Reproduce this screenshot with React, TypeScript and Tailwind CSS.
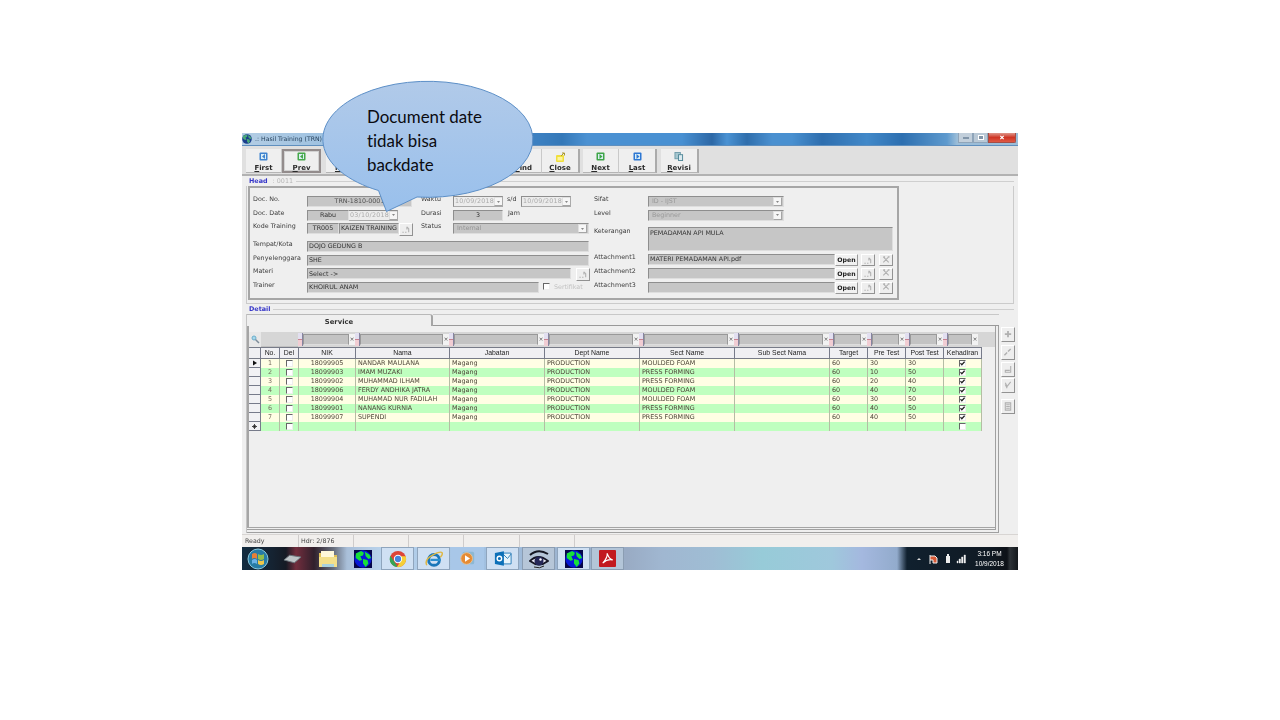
import type { ReactNode } from "react";

const FIELD =
  "flex items-center overflow-hidden whitespace-nowrap border border-t-[#8e8e8e] border-l-[#8e8e8e] border-r-[#dedede] border-b-[#dedede] bg-[#c6c6c6] px-[1px] leading-none";

function Label({ children, className = "" }: { children: ReactNode; className?: string }) {
  return <span className={"shrink-0 whitespace-nowrap leading-none text-[#3c3c3c] " + className}>{children}</span>;
}

function Arrow() {
  return (
    <span className="ml-auto flex h-[9px] w-[9px] shrink-0 items-center justify-center border border-t-[#e0e0e0] border-l-[#e0e0e0] border-r-[#a5a5a5] border-b-[#a5a5a5] bg-[#f6f6f6]">
      <svg viewBox="0 0 6 4" className="h-[2px] w-[3px]"><path d="M0 0h6L3 4z" fill="#888" /></svg>
    </span>
  );
}

function Small({ kind, className = "" }: { kind: string; className?: string }) {
  return (
    <span className={"flex h-[13px] w-[14px] shrink-0 items-center justify-center border border-t-white border-l-white border-r-[#929292] border-b-[#929292] bg-[#eeeeee] " + className}>
      <svg viewBox="0 0 10 10" className="h-[9px] w-[10px]" fill="none" stroke="#b0b0b0" strokeWidth="1.2">
        {kind === "x" && <path d="M2 1l6 6M8 1L2 7M2 1h2M7 1h2" />}
        {kind === "find" && <path d="M1 8h1.5M4 8h1.5M6 2l2 2v4M6 2v3" />}
        {kind === "plus" && <path d="M5 1v7M1.500 4.500h7" strokeWidth="2" />}
        {kind === "edit" && <path d="M1 8l3-3M5 4l3-3" strokeWidth="1.600" />}
        {kind === "save" && <path d="M8 1v7H2V6h5" />}
        {kind === "check" && <path d="M2 2l2 4 4-5M2 4l2 4" />}
        {kind === "doc" && <path d="M2 1h6v8H2zM3 3h4M3 5h4M3 7h4" />}
      </svg>
    </span>
  );
}

function DateField({ value, className }: { value: string; className: string }) {
  return (
    <span className={"flex h-[11px] shrink-0 items-center overflow-hidden whitespace-nowrap border border-t-[#8e8e8e] border-l-[#8e8e8e] border-r-[#aaa] border-b-[#aaa] bg-[#ececec] pl-[1px] leading-none tracking-[0.25px] text-[#aaa] " + className}>
      {value}<Arrow />
    </span>
  );
}

function ToolButton({ label, width, icon, framed = false, last = false }: { label: string; width: string; icon?: ReactNode; framed?: boolean; last?: boolean }) {
  return (
    <div className={"flex h-[24px] shrink-0 flex-col items-center justify-between bg-[#efefef] " + width + " " + (framed ? "border-2 border-[#938c8c] pt-[1px] outline-1 -outline-offset-3 outline-[#d2d2d2]" : "pt-[3px] border-b border-b-[#b5b5b5] border-r " + (last ? "border-r-2 border-r-[#ababab]" : "border-r-[#c9c9c9]"))}>
      <span className="flex h-[10px] items-center">{icon}</span>
      <span className={"text-[7px] leading-[8px] font-bold text-[#2b2b2b] " + (framed ? "-mb-px" : "")}>
        <span className="underline">{label.charAt(0)}</span>{label.slice(1)}
      </span>
    </div>
  );
}

function Square({ color, dir }: { color: string; dir: string }) {
  return (
    <svg viewBox="0 0 9 9" className="h-[9px] w-[9px]">
      <rect x=".5" y=".5" width="8" height="8" rx="1" fill={color} />
      <rect x="2" y="2" width="5" height="5" fill="#dbeef5" />
      <path d={dir === "l" ? "M6 2v5L3 4.500z" : "M3.500 2v5l3-2.500z"} fill={color} />
    </svg>
  );
}

const columns = [
  { name: "NIK", w: "w-[57px]" },
  { name: "Nama", w: "w-[94px]" },
  { name: "Jabatan", w: "w-[95px]" },
  { name: "Dept Name", w: "w-[95px]" },
  { name: "Sect Name", w: "w-[95px]" },
  { name: "Sub Sect Nama", w: "w-[95px]" },
  { name: "Target", w: "w-[38px]" },
  { name: "Pre Test", w: "w-[38px]" },
  { name: "Post Test", w: "w-[38px]" },
  { name: "Kehadiran", w: "w-[38px]" },
];

const M = "MOULDED FOAM";
const P = "PRESS FORMING";
const rows = [
  ["18099905", "NANDAR MAULANA", M, "30", "30"],
  ["18099903", "IMAM MUZAKI", P, "10", "50"],
  ["18099902", "MUHAMMAD ILHAM", P, "20", "40"],
  ["18099906", "FERDY ANDHIKA JATRA", M, "40", "70"],
  ["18099904", "MUHAMAD NUR FADILAH", M, "30", "50"],
  ["18099901", "NANANG KURNIA", P, "40", "50"],
  ["18099907", "SUPENDI", P, "40", "50"],
];

function Check({ on = false }: { on?: boolean }) {
  return (
    <span className="flex h-[7px] w-[7px] shrink-0 border border-t-[#666] border-l-[#666] border-r-[#eee] border-b-[#eee] bg-white">
      {on && <svg viewBox="0 0 6 6" className="h-[5px] w-[5px]"><path d="M.5 2.500L2.200 4.500 5.500.8" fill="none" stroke="#222" strokeWidth="1.500" /></svg>}
    </span>
  );
}

function Row({ index, data }: { index: number; data?: string[] }) {
  const cells = data ? [data[0], data[1], "Magang", "PRODUCTION", data[2], "", "60", data[3], data[4]] : ["", "", "", "", "", "", "", "", ""];
  return (
    <div className={"flex h-[9.060px] text-[6.400px] leading-[9px] text-[#4d4538] " + (index % 2 ? "bg-[#bfffbf]" : "bg-[#fffee4]")}>
      <div className="flex w-[12px] items-center justify-center border-r border-b border-[#777b8a] bg-[#f2f2f4]">
        {index === 0 && <svg viewBox="0 0 5 6" className="h-[6px] w-[4px]"><path d="M0 0l5 3-5 3z" fill="#111" /></svg>}
        {!data && <svg viewBox="0 0 6 6" className="h-[5px] w-[5px]"><path d="M3 0v6M0 3h6M1.500 1.500l3 3M4.500 1.500l-3 3" stroke="#222" /></svg>}
      </div>
      <div className="w-[19px] border-r border-[#b5bda4] text-center text-[#777060]">{data ? index + 1 : ""}</div>
      <div className="flex w-[19px] items-center justify-center border-r border-[#b5bda4]"><Check /></div>
      {cells.map((cell, i) => (
        <div key={i} className={columns[i].w + " overflow-hidden border-r border-[#b5bda4] whitespace-nowrap " + (i === 0 ? "text-center" : "pl-[2px]")}>{cell}</div>
      ))}
      <div className="flex w-[38px] items-center justify-center border-r border-[#b5bda4]"><Check on={!!data} /></div>
    </div>
  );
}

function Earth({ square = false }: { square?: boolean }) {
  return (
    <svg viewBox="0 0 20 20" className="h-full w-full">
      {square ? <rect width="20" height="20" fill="#06064a" /> : null}
      <circle cx="10" cy="10" r="9.600" fill={square ? "#0718d8" : "#1a3e8c"} />
      <path d="M2 4l6-3 3 2-1 3-3 1 2 4-3 1-4-3zM12 2l5 3 2 4-3 1-3-3zM10 10l5 1 1 4-3 4-3-4z" fill={square ? "#17e03a" : "#48a87a"} />
    </svg>
  );
}

function Task({ className = "", children }: { className?: string; children: ReactNode }) {
  return <div className={"flex h-[23px] shrink-0 items-center justify-center " + className}>{children}</div>;
}

const TILE = "w-[33px] border border-[#8fa5bd] bg-[#cfe0f3]";

export default function App() {
  return (
    <div className="relative h-[720px] w-[1280px] overflow-hidden bg-white pt-[133px] pl-[242px]">
      <div className="flex h-[437px] w-[776px] flex-col overflow-hidden bg-[#efefef] text-[6.350px] blur-[0.400px]" style={{ fontFamily: '"DejaVu Sans", Verdana, sans-serif' }}>
        {/* Title bar */}
        <div className="flex h-[13px] shrink-0 items-center border-b border-[#5f8fbe] bg-[linear-gradient(90deg,#b3cde4_0,#9fc2e1_80px,#5c93c8_150px,#3b7fc0_300px,#3478b8_320px,#4b91d2_345px,#4890d2_440px,#2d68a6_470px,#4a92d3_485px,#2f6eac_505px,#4a90d0_530px,#4990d0_550px,#2e6eae_580px,#4289c9_625px,#2d6fb0_660px,#5e9ace_705px,#9bbdd8_715px)] pr-[2px]">
          <span className="h-[10px] w-[10px]"><Earth /></span>
          <span className="ml-[3px] text-[6.200px] whitespace-nowrap text-[#27425c]">.: Hasil Training (TRN)</span>
          <span className="ml-auto flex h-[10px] self-start">
            <span className="flex w-[15px] items-center justify-center border border-t-0 border-[#8fa5ba] bg-[#c2cfdb]"><i className="h-[2px] w-[6px] border border-[#8296aa] bg-white" /></span>
            <span className="flex w-[15px] items-center justify-center border border-t-0 border-[#8fa5ba] bg-[#bac9d6]"><i className="h-[5px] w-[6px] border border-white bg-[#8395a8]" /></span>
            <span className="flex w-[28px] items-center justify-center rounded-br-[2px] border border-t-0 border-[#a54d45] bg-[linear-gradient(#df978b,#cf3524_50%,#df5844)]">
              <svg viewBox="0 0 6 6" className="h-[5px] w-[6px]"><path d="M1 1l4 4M5 1L1 5" stroke="#fff" strokeWidth="1.500" /></svg>
            </span>
          </span>
        </div>

        {/* Toolbar */}
        <div className="flex h-[30px] shrink-0 items-center border-b-2 border-[#b2b2b2] bg-[#e0e0e0] pt-px pl-[4px]">
          <ToolButton label="First" width="w-[36px]" icon={<Square color="#3f83cf" dir="l" />} />
          <ToolButton label="Prev" width="w-[39px]" framed icon={<Square color="#46a84b" dir="l" />} />
          <div className="ml-[5px] flex">
            <ToolButton label="New" width="w-[36px]" />
            <ToolButton label="" width="w-[144px]" />
            <ToolButton label="Find" width="w-[36px]" />
            <ToolButton label="Close" width="w-[38px]" last icon={
              <svg viewBox="0 0 11 10" className="h-[10px] w-[11px]"><rect x="1" y="3" width="8" height="7" rx="1" fill="#f0df3c" /><rect x="2.500" y="5" width="5" height="3.500" fill="#fbf3a0" /><path d="M6 4l3-3M7 1h2.500v2.500" fill="none" stroke="#a89835" /></svg>
            } />
          </div>
          <div className="ml-[3px] flex">
            <ToolButton label="Next" width="w-[36px]" icon={<Square color="#3fa548" dir="r" />} />
            <ToolButton label="Last" width="w-[38px]" last icon={<Square color="#2d77d3" dir="r" />} />
          </div>
          <div className="ml-[4px] flex">
            <ToolButton label="Revisi" width="w-[38px]" last icon={
              <svg viewBox="0 0 10 10" className="h-[9px] w-[10px]"><rect x=".5" y=".5" width="6" height="7" fill="#a5c6cf" stroke="#6d9aa8" /><rect x="4.500" y="3" width="4.500" height="6.500" fill="#dbeaf0" stroke="#4b8494" /></svg>
            } />
          </div>
        </div>

        {/* Head group */}
        <div className="flex h-[10px] shrink-0 items-center pr-[4px] pl-[7px] text-[6.400px] leading-none">
          <b className="text-[#3434c8]">Head</b>
          <span className="ml-[5px] text-[#b5b5b5]">: 0011</span>
          <i className="ml-[3px] h-px flex-1 bg-[#cfcfcf]" />
        </div>
        <div className="mr-[4px] ml-[4px] h-[118px] shrink-0 border-r border-b border-l border-[#cbcbcb] pl-[1px]">
          <div className="flex h-[114px] w-[651px] border-2 border-[#a6a6a6] pt-[8px] pl-[3px]">
            <div className="w-[341px] shrink-0">
              <div className="flex h-[45px]">
                <div className="flex w-[168px] flex-col gap-[2.500px]">
                  <div className="flex h-[11px]"><Label className="w-[54px]">Doc. No.</Label><span className={FIELD + " w-[105px] justify-center text-[#505050]"}>TRN-1810-0001</span></div>
                  <div className="flex h-[11px]"><Label className="w-[54px]">Doc. Date</Label><span className={FIELD + " w-[42px] justify-center text-[#333]"}>Rabu</span><DateField value="03/10/2018" className="w-[49px] !border-l-0" /></div>
                  <div className="flex h-[11px]"><Label className="w-[54px]">Kode Training</Label><span className={FIELD + " w-[32px] justify-center text-[#333]"}>TR005</span><span className={FIELD + " w-[60px] text-[#333]"}>KAIZEN TRAINING</span><Small kind="find" /></div>
                </div>
                <div className="flex w-[173px] flex-col gap-[2.500px]">
                  <div className="flex h-[11px]"><Label className="w-[32px]">Waktu</Label><DateField value="10/09/2018" className="w-[50px]" /><Label className="ml-[4px] w-[14px]">s/d</Label><DateField value="10/09/2018" className="w-[50px]" /></div>
                  <div className="flex h-[11px]"><Label className="w-[32px]">Durasi</Label><span className={FIELD + " w-[50px] justify-center text-[#333]"}>3</span><Label className="ml-[5px]">Jam</Label></div>
                  <div className="flex h-[11px]"><Label className="w-[32px]">Status</Label><span className={FIELD + " w-[136px] pl-[3px] text-[#949494]"}>Internal<Arrow /></span></div>
                </div>
              </div>
              <div className="flex flex-col gap-[2.700px]">
                <div className="flex h-[11px]"><Label className="w-[54px]">Tempat/Kota</Label><span className={FIELD + " w-[282px] text-[#333]"}>DOJO GEDUNG B</span></div>
                <div className="flex h-[11px]"><Label className="w-[54px] tracking-[0.050px]">Penyelenggara</Label><span className={FIELD + " w-[282px] text-[#333]"}>SHE</span></div>
                <div className="flex h-[11px]"><Label className="w-[54px]">Materi</Label><span className={FIELD + " w-[264px] text-[#333]"}>Select -&gt;</span><Small kind="find" className="ml-[5px]" /></div>
                <div className="flex h-[11px]"><Label className="w-[54px]">Trainer</Label><span className={FIELD + " w-[232px] text-[#333]"}>KHOIRUL ANAM</span><span className="mt-[1px] ml-[4px]"><Check /></span><span className="ml-[4px] leading-[9px] text-[#c2c2c2]">Sertifikat</span></div>
              </div>
            </div>
            <div className="flex flex-col">
              <div className="flex h-[13.500px]"><Label className="w-[54px]">Sifat</Label><span className={FIELD + " h-[11px] w-[136px] pl-[3px] text-[#999]"}>ID - IJST<Arrow /></span></div>
              <div className="flex h-[17.500px]"><Label className="w-[54px]">Level</Label><span className={FIELD + " h-[11px] w-[136px] pl-[3px] text-[#999]"}>Beginner<Arrow /></span></div>
              <div className="flex h-[27px]"><Label className="w-[54px] pt-[1px]">Keterangan</Label><span className={FIELD + " h-[24px] w-[245px] !items-start pt-[2px] text-[#333]"}>PEMADAMAN API MULA</span></div>
              {["MATERI PEMADAMAN API.pdf", "", ""].map((file, i) => (
                <div key={i} className="flex h-[13.800px]">
                  <Label className="w-[54px] tracking-[0.050px]">Attachment{i + 1}</Label>
                  <span className={FIELD + " h-[11px] w-[187px] text-[#333]"}>{file}</span>
                  <span className="flex h-[12px] w-[23px] items-center justify-center border border-t-white border-l-white border-r-[#999] border-b-[#999] bg-[#f1f1f1] text-[6.200px] font-bold text-[#222]">Open</span>
                  <Small kind="find" className="ml-[3px] !h-[12px]" />
                  <Small kind="x" className="ml-[4px] !h-[12px]" />
                </div>
              ))}
            </div>
          </div>
        </div>

        {/* Detail group */}
        <div className="mt-px flex h-[9px] shrink-0 items-center pr-[4px] pl-[7px] text-[6.400px] leading-none">
          <b className="text-[#3434c8]">Detail</b>
          <i className="ml-[3px] h-px flex-1 bg-[#cfcfcf]" />
        </div>
        <div className="flex h-[219px] shrink-0 pl-[4px]">
          <div className="w-[753px] border-l border-[#c4c4c4]">
            <div className="flex h-[12px]">
              <div className="w-[186px] rounded-tr-[3px] border-t border-r-2 border-t-[#b9b9b9] border-r-[#a5a5a5] pt-[3px] text-center text-[6.800px] leading-[8px] font-bold text-[#333]">Service</div>
              <div className="flex-1 border-t border-b border-t-[#c8c8c8] border-b-[#999]" />
            </div>
            <div className="h-[207px] border-r-4 border-b-4 border-double border-[#a0a0a0]">
              <div className="h-[202px] border-l-2 border-b border-[#a5a5a5] pt-[6px]">
                <div className="flex h-[15px] w-[746px] bg-[#d6d6d6]">
                  <span className="flex w-[12px] items-center justify-center bg-[#e8e8e8]">
                    <svg viewBox="0 0 9 9" className="h-[9px] w-[9px]"><circle cx="3" cy="3" r="2" fill="#a7d8ec" stroke="#6baecb" /><path d="M4.500 4.500L8 8" stroke="#7d8c99" strokeWidth="1.500" /></svg>
                  </span>
                  <span className="w-[37px] border-b border-[#c0c0c0]" />
                  {columns.map((c, i) => (
                    <span key={c.name} className={"flex h-[14px] items-center " + c.w}>
                      <i className="flex h-[13px] w-[5px] flex-col border-r border-[#8684a0] bg-[#e4dce5]"><i className="h-[7px] border-b border-[#c98290] bg-[#e2dff0]" /><i className="h-[6px] bg-[#f1cdd3]" /></i>
                      <i className="h-[11px] flex-1 border border-[#999] border-b-[#ddd] bg-[#c3c3c3]" />
                      <i className={"flex h-[11px] w-[6px] items-center justify-center bg-[#f2f2f2] text-[6px] leading-none text-[#555] not-italic " + (i === 9 ? "mr-[3px]" : "")}>×</i>
                    </span>
                  ))}
                </div>
                <div className="flex h-[12px] w-[733px] border-t border-b border-[#777b88] bg-[#f0f0f3] text-[6.900px] leading-[10px] text-[#222]" style={{ fontFamily: '"Liberation Sans", Arial, sans-serif' }}>
                  <div className="w-[12px] border-r border-[#777b8a]" />
                  <div className="w-[19px] border-r border-[#777b8a] text-center">No.</div>
                  <div className="w-[19px] border-r border-[#777b8a] text-center">Del</div>
                  {columns.map((c) => <div key={c.name} className={c.w + " border-r border-[#777b8a] text-center whitespace-nowrap"}>{c.name}</div>)}
                </div>
                <div className="w-[733px]">
                  {rows.map((r, i) => <Row key={r[0]} index={i} data={r} />)}
                  <Row index={7} />
                </div>
              </div>
            </div>
          </div>
          <div className="flex flex-col pt-[13px] pl-[2px]">
            <Small kind="plus" className="!h-[15px]" />
            <Small kind="edit" className="mt-[3px] !h-[15px]" />
            <Small kind="save" className="mt-[2px] !h-[15px]" />
            <Small kind="check" className="mt-[1px] !h-[15px]" />
            <Small kind="doc" className="mt-[6px] !h-[15px]" />
          </div>
        </div>

        {/* Status bar */}
        <div className="mt-auto flex h-[13px] shrink-0 items-center border-t border-[#d8d5d3] bg-[#f1efed] text-[6.300px] leading-[12px] text-[#444]">
          <span className="w-[57px] border-r border-[#cfcccb] pl-[3px]">Ready</span>
          <span className="w-[55px] border-r border-[#cfcccb] pl-[2px]">Hdr: 2/876</span>
          <span className="h-[12px] w-[55px] border-r border-[#cfcccb]" />
          <span className="h-[12px] w-[55px] border-r border-[#cfcccb]" />
          <span className="h-[12px] w-[56px] border-r border-[#cfcccb]" />
          <span className="h-[12px] w-[55px] border-r border-[#cfcccb]" />
        </div>

        {/* Taskbar */}
        <div className="flex h-[23px] shrink-0 bg-[linear-gradient(90deg,#122b3f_0,#152332_30px,#151a24_44px,#722d3d_54px,#30202c_72px,#69707f_92px,#a9bfd9_105px,#b9d3ec_140px,#a2c2e3_230px,#99abc4_385px,#a0b7d1_420px,#9fbdd4_470px,#97cbd8_520px,#9fc8dc_590px,#a4b8df_620px,#92abcc_655px,#10202e_665px,#101a24_745px,#0d1117_765px,#2e3338_768px,#14181c_776px)]">
          <Task className="w-[31px]">
            <svg viewBox="0 0 22 22" className="h-[22px] w-[22px]"><circle cx="11" cy="11" r="10" fill="#277ba5" stroke="#8ac8dc" /><path d="M5 6q3-2 5 0v5q-3-2-5 0z" fill="#e77f36" /><path d="M11 6q3 2 6 0v5q-3 2-6 0z" fill="#92bf4d" /><path d="M5 12q3-2 5 0v4q-3-2-5 0z" fill="#6db2e6" /><path d="M11 12q3 2 6 0v4q-3 2-6 0z" fill="#efc84a" /></svg>
          </Task>
          <Task className="w-[38px]">
            <svg viewBox="0 0 20 12" className="h-[12px] w-[19px]"><path d="M7 2l12 2-7 6L1 7z" fill="#bfc5c8" stroke="#69757b" /></svg>
          </Task>
          <Task className="w-[34px]">
            <svg viewBox="0 0 20 18" className="h-[18px] w-[20px]"><path d="M1 3h7l2 2h9v12H1z" fill="#e0bf55" /><path d="M3 1h13v9H3z" fill="#fff8da" /><path d="M1 7h18v10H1z" fill="#f3df8a" /><path d="M4 14h12v3H4z" fill="#a8d1df" /></svg>
          </Task>
          <Task className="w-[36px]"><span className="h-[18px] w-[18px]"><Earth square /></span></Task>
          <Task className={TILE}>
            <svg viewBox="0 0 20 20" className="h-[18px] w-[18px]"><circle cx="10" cy="10" r="9" fill="#dc4538" /><path d="M1.500 6.500L8 16l1.500 3A9 9 0 011.500 6.500z" fill="#35a554" /><path d="M18.500 7H10l3 5-4 7a9 9 0 009.500-12z" fill="#f5cf37" /><circle cx="10" cy="10" r="4.600" fill="#fff" /><circle cx="10" cy="10" r="3.500" fill="#4484dc" /></svg>
          </Task>
          <Task className={TILE + " ml-[3px]"}>
            <svg viewBox="0 0 20 20" className="h-[18px] w-[18px]"><circle cx="10" cy="11" r="6" fill="none" stroke="#1976b9" strokeWidth="3.200" /><path d="M6 11h11" stroke="#2a8fd0" strokeWidth="2.500" /><path d="M2 17Q-1 11 8 6t11-3q1 2-2 5" fill="none" stroke="#dfb743" strokeWidth="1.600" /></svg>
          </Task>
          <Task className="ml-[1px] w-[33px] bg-[#a8c7e8]">
            <svg viewBox="0 0 18 18" className="h-[15px] w-[15px]"><rect x="3" y="1" width="14" height="15" rx="2" fill="#8cb8d3" /><circle cx="8" cy="9" r="7" fill="#e58b34" stroke="#efc492" /><path d="M6 5l6 4-6 4z" fill="#fff" /></svg>
          </Task>
          <Task className={TILE + " ml-[2px]"}>
            <svg viewBox="0 0 20 18" className="h-[17px] w-[18px]"><path d="M9 3h10v12H9z" fill="#e8f4fb" stroke="#2378b6" /><path d="M10 4l5 5 4-5" fill="none" stroke="#2378b6" /><path d="M1 3l10-2v16L1 15z" fill="#0d70b8" /><circle cx="6" cy="9" r="2.500" fill="none" stroke="#fff" strokeWidth="1.500" /></svg>
          </Task>
          <Task className="ml-[3px] w-[33px] border border-[#8b9db2] bg-[#b6c6d8]">
            <svg viewBox="0 0 20 20" className="h-[20px] w-[20px]"><path d="M1 6Q9-1 19 5" fill="none" stroke="#161823" strokeWidth="2" /><path d="M1 12Q9 4 19 12 10 19 1 12z" fill="#e7e8f4" stroke="#171725" strokeWidth="1.800" /><circle cx="10" cy="12" r="4.500" fill="#252758" /><circle cx="11.500" cy="10.500" r="1.200" fill="#fff" /><path d="M5 18q6 2 10-1" stroke="#222" fill="none" /></svg>
          </Task>
          <Task className={TILE + " ml-[2px]"}><span className="h-[18px] w-[18px]"><Earth square /></span></Task>
          <Task className="ml-[1px] w-[33px] border border-[#8b9db2] bg-[#b3c5d8]">
            <svg viewBox="0 0 18 18" className="h-[17px] w-[17px]"><rect width="18" height="18" rx="1" fill="#c2191f" /><path d="M4 14C8 9 9 5 8.500 3.500c2 5 4 7 6 7C11 9.500 7 11 4 14z" fill="none" stroke="#fff" strokeWidth="1.200" /></svg>
          </Task>
          <div className="ml-auto flex items-center pr-[13px] text-white">
            <svg viewBox="0 0 50 10" className="mr-[8px] h-[10px] w-[50px]"><path d="M1 6l2-2 2 2z" fill="#ddd" /><path d="M14 1v9M14 2h5l2 2v5h-4V6h-3" stroke="#eee" fill="#d85a37" /><path d="M30 2h4v7h-4zM31 0h2v2h-2z" fill="#eee" /><path d="M41 9V7h1v2zM43 9V5h1.500v4zM45.500 9V3H47v6zM48 9V1h1.500v8z" fill="#eee" stroke="#eee" strokeWidth=".4" /></svg>
            <div className="w-[31px] text-center text-[6.500px] leading-[10px] whitespace-nowrap" style={{ fontFamily: '"Liberation Sans", Arial, sans-serif' }}>
              <div>3:16 PM</div>
              <div>10/9/2018</div>
            </div>
          </div>
        </div>
      </div>

      {/* Callout */}
      <div className="absolute top-[80px] left-[322px] h-[134px] w-[213px]">
        <svg viewBox="322 80 213 134" className="absolute inset-0 h-full w-full">
          <defs><linearGradient id="bubble" x1="0" y1="0" x2="0" y2="1"><stop offset="0" stopColor="#b1cae9" /><stop offset="1" stopColor="#99c0ec" /></linearGradient></defs>
          <path d="M378.500 190.500A105 58 0 1 1 417 197L386.500 211.500Z" fill="url(#bubble)" stroke="#5c8fc7" strokeWidth="1" />
        </svg>
        <p className="relative pt-[24.500px] pl-[45px] text-[16.900px] leading-[24px] whitespace-nowrap text-[#0b0b10]" style={{ fontFamily: 'Lato, Carlito, sans-serif', fontVariantLigatures: "none" }}>Document date<br />tidak bisa<br />backdate</p>
      </div>
    </div>
  );
}
